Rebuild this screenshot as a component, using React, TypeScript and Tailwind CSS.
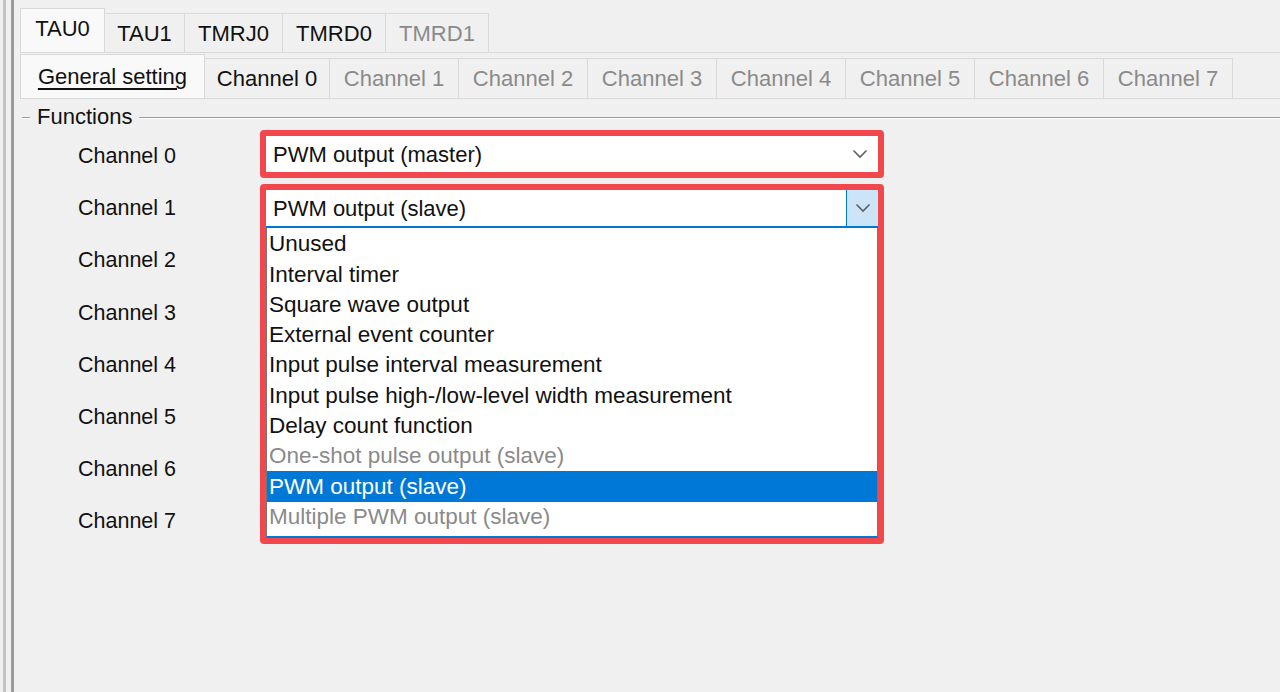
import React from "react";

const Chevron = () => (
  <svg width="16" height="10" viewBox="0 0 16 10" fill="none">
    <path d="M1.5 1.5 L8 8 L14.5 1.5" stroke="#5f5f5f" strokeWidth="1.6" />
  </svg>
);

const row1 = [
  { t: "TAU0", w: 85, sel: true },
  { t: "TAU1", w: 80 },
  { t: "TMRJ0", w: 98 },
  { t: "TMRD0", w: 103 },
  { t: "TMRD1", w: 103, dis: true },
];

const row2 = [
  { t: "Channel 0", w: 125 },
  { t: "Channel 1", w: 129, dis: true },
  { t: "Channel 2", w: 129, dis: true },
  { t: "Channel 3", w: 129, dis: true },
  { t: "Channel 4", w: 129, dis: true },
  { t: "Channel 5", w: 129, dis: true },
  { t: "Channel 6", w: 129, dis: true },
  { t: "Channel 7", w: 129, dis: true },
];

const items = [
  { t: "Unused" },
  { t: "Interval timer" },
  { t: "Square wave output" },
  { t: "External event counter" },
  { t: "Input pulse interval measurement" },
  { t: "Input pulse high-/low-level width measurement" },
  { t: "Delay count function" },
  { t: "One-shot pulse output (slave)", dis: true },
  { t: "PWM output (slave)", sel: true },
  { t: "Multiple PWM output (slave)", dis: true },
];

export default function App() {
  return (
    <div
      className="w-[1280px] h-[692px] bg-[#f0f0f0] flex overflow-hidden text-[22px] text-[#111]"
      style={{ fontFamily: '"Liberation Sans", Arial, sans-serif' }}
    >
      <div className="w-[3px] shrink-0" />
      <div className="w-[3px] shrink-0 bg-[#c4c4c4]" />
      <div className="w-[5px] shrink-0" />
      <div className="w-[3px] shrink-0 bg-[#9a9a9a]" />
      <div className="flex-1 flex flex-col pl-[6px] pt-[8px] min-w-0">
        {/* Row 1 tabs */}
        <div className="flex items-end h-[45px] border-b border-[#d9d9d9]">
          {row1.map((r) => (
            <div
              key={r.t}
              style={{ width: r.w }}
              className={
                r.sel
                  ? "h-[44px] flex items-center justify-center bg-[#f9f9f9] border border-b-0 border-[#d9d9d9] text-[#111] pb-[4px]"
                  : r.dis
                  ? "h-[39px] flex items-center justify-center bg-[#f0f0f0] border border-b-0 border-l-0 border-[#d9d9d9] text-[#8a8a8a]"
                  : "h-[39px] flex items-center justify-center bg-[#f0f0f0] border border-b-0 border-l-0 border-[#d9d9d9] text-[#111]"
              }
            >
              {r.t}
            </div>
          ))}
        </div>
        {/* Row 2 tabs */}
        <div className="flex items-end h-[46px] border-b border-[#d9d9d9]">
          <div className="w-[185px] h-[44px] flex items-center justify-center bg-[#f9f9f9] border border-b-0 border-[#d9d9d9] text-[#111] underline underline-offset-[4px] decoration-[1.5px]">
            General setting
          </div>
          {row2.map((r) => (
            <div
              key={r.t}
              style={{ width: r.w }}
              className={
                r.dis
                  ? "h-[40px] flex items-center justify-center bg-[#f0f0f0] border border-b-0 border-l-0 border-[#d9d9d9] text-[#8a8a8a]"
                  : "h-[40px] flex items-center justify-center bg-[#f0f0f0] border border-b-0 border-l-0 border-[#d9d9d9] text-[#111]"
              }
            >
              {r.t}
            </div>
          ))}
        </div>
        {/* Group header */}
        <div className="flex items-center h-[30px] mt-[1px] pl-[2px]">
          <div className="w-[8px] h-[2px] mt-[6px] border-t border-[#9c9c9c] border-b border-b-white" />
          <div className="px-[7px] pt-[3px] text-[#111] leading-none">Functions</div>
          <div className="flex-1 h-[2px] mt-[6px] border-t border-[#9c9c9c] border-b border-b-white" />
        </div>
        {/* Body */}
        <div className="flex">
          <div className="w-[240px] shrink-0 pl-[58px] flex flex-col">
            {[0, 1, 2, 3, 4, 5, 6, 7].map((i) => (
              <div key={i} className="h-[52.2px] flex items-center text-[21.5px] text-[#111]">
                Channel {i}
              </div>
            ))}
          </div>
          <div className="flex flex-col gap-[6px] w-[624px]">
            <div className="border-[6px] border-[#f2474c] rounded-[4px] h-[48px]">
              <div className="h-full bg-white flex items-center pl-[7px] pr-[10px]">
                <span className="flex-1">PWM output (master)</span>
                <Chevron />
              </div>
            </div>
            <div className="border-[6px] border-[#f2474c] rounded-[4px] flex flex-col">
              <div className="h-[38px] bg-white flex border-b-2 border-[#0078d7]">
                <span className="flex-1 flex items-center pl-[7px]">PWM output (slave)</span>
                <div className="w-[32px] bg-[#cce4f7] border-l border-[#0078d7] flex items-center justify-center">
                  <Chevron />
                </div>
              </div>
              <div className="bg-white border-x border-[#767676] border-b-2 border-b-[#0078d7] flex flex-col pt-[1px] pb-[4px]">
                {items.map((it) => (
                  <div
                    key={it.t}
                    className={
                      it.sel
                        ? "h-[30.3px] flex items-center pl-[2px] text-[22.5px] bg-[#0078d7] text-white"
                        : it.dis
                        ? "h-[30.3px] flex items-center pl-[2px] text-[22.5px] text-[#8a8a8a]"
                        : "h-[30.3px] flex items-center pl-[2px] text-[22.5px] text-[#111]"
                    }
                  >
                    {it.t}
                  </div>
                ))}
              </div>
            </div>
          </div>
        </div>
      </div>
    </div>
  );
}
